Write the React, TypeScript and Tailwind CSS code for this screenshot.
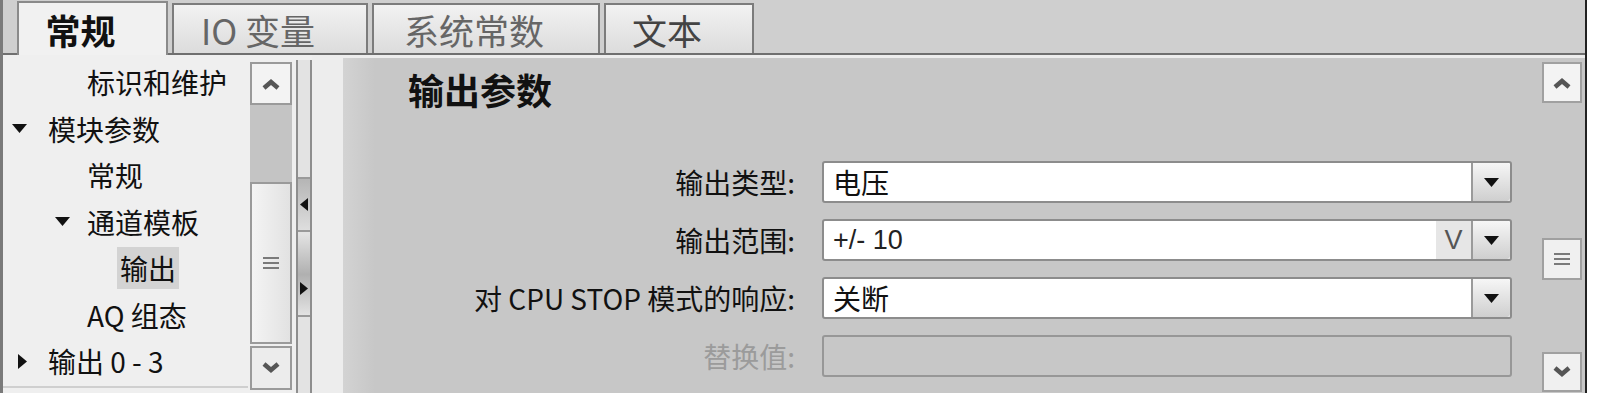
import React from "react";

const FONT = "font-['Noto_Sans_CJK_SC','Noto_Sans',sans-serif]";

function Chevron({ up }: { up?: boolean }) {
    return (
        <svg width="22" height="14" viewBox="0 0 22 14">
            <polyline
                points={up ? "4,11 11,5 18,11" : "4,3 11,9 18,3"}
                fill="none"
                stroke="#555"
                strokeWidth="4.5"
                strokeLinejoin="miter"
            />
        </svg>
    );
}

function Grip() {
    return (
        <div className="flex flex-col gap-[3px]">
            <div className="w-[16px] h-[2px] bg-[#7a7a7a]" />
            <div className="w-[16px] h-[2px] bg-[#7a7a7a]" />
            <div className="w-[16px] h-[2px] bg-[#7a7a7a]" />
        </div>
    );
}

function Down() {
    return (
        <svg width="15" height="9" viewBox="0 0 15 9">
            <polygon points="0,0 15,0 7.5,9" fill="#111" />
        </svg>
    );
}

function Right() {
    return (
        <svg width="9" height="15" viewBox="0 0 9 15">
            <polygon points="0,0 9,7.5 0,15" fill="#111" />
        </svg>
    );
}

function Left() {
    return (
        <svg width="8" height="13" viewBox="0 0 8 13">
            <polygon points="8,0 0,6.5 8,13" fill="#111" />
        </svg>
    );
}

function SmallRight() {
    return (
        <svg width="8" height="13" viewBox="0 0 8 13">
            <polygon points="0,0 8,6.5 0,13" fill="#111" />
        </svg>
    );
}

function DropButton() {
    return (
        <div className="w-[39px] h-full flex items-center justify-center border-l-2 border-[#9a9a9a] bg-gradient-to-b from-[#f6f6f6] to-[#cfcfcf] rounded-r-[3px]">
            <Down />
        </div>
    );
}

export default function App() {
    return (
        <div className={`w-[1600px] h-[407px] bg-white ${FONT}`}>
            <div className="w-[1587px] h-[393px] flex flex-col border-l-[3px] border-r-2 border-l-[#7a7a7a] border-r-[#222]">
                {/* Tabs */}
                <div className="h-[55px] flex items-end gap-[4px] pl-[14px] bg-[#cfcfcf] border-b-2 border-[#6f6f6f]">
                    <div className="w-[151px] h-[54px] -mb-[2px] flex items-center justify-center pr-[24px] bg-[#f1f1f1] border-2 border-b-0 border-[#8a8a8a] text-[35px] font-bold text-[#111] leading-none">
                        常规
                    </div>
                    <div className="w-[196px] h-[50px] flex items-center justify-center pr-[24px] bg-gradient-to-b from-[#f2f2f2] to-[#dcdcdc] border-2 border-b-0 border-[#7c7c7c] text-[35px] text-[#666] leading-none">
                        IO 变量
                    </div>
                    <div className="w-[228px] h-[50px] flex items-center justify-center pr-[24px] bg-gradient-to-b from-[#f2f2f2] to-[#dcdcdc] border-2 border-b-0 border-[#7c7c7c] text-[35px] text-[#666] leading-none">
                        系统常数
                    </div>
                    <div className="w-[150px] h-[50px] flex items-center justify-center pr-[24px] bg-gradient-to-b from-[#f2f2f2] to-[#dcdcdc] border-2 border-b-0 border-[#7c7c7c] text-[35px] text-[#444] leading-none">
                        文本
                    </div>
                </div>

                {/* Body */}
                <div className="flex-1 flex bg-[#efefef]">
                    {/* Tree */}
                    <div className="w-[245px] pt-[4px] text-[28px] text-[#111] leading-none border-b-2 border-[#cfcfcf] mb-[5px]">
                        <div className="h-[46.5px] flex items-center pl-[84px]">标识和维护</div>
                        <div className="h-[46.5px] flex items-center pl-[9px]">
                            <span className="w-[36px] flex"><Down /></span>模块参数
                        </div>
                        <div className="h-[46.5px] flex items-center pl-[84px]">常规</div>
                        <div className="h-[46.5px] flex items-center pl-[52px]">
                            <span className="w-[32px] flex"><Down /></span>通道模板
                        </div>
                        <div className="h-[46.5px] flex items-center pl-[114px]">
                            <span className="h-[42px] flex items-center px-[3px] bg-[#d3d3d3]">输出</span>
                        </div>
                        <div className="h-[46.5px] flex items-center pl-[84px]">AQ 组态</div>
                        <div className="h-[46.5px] flex items-center pl-[15px]">
                            <span className="w-[30px] flex"><Right /></span>输出 0 - 3
                        </div>
                    </div>

                    {/* Tree scrollbar */}
                    <div className="w-[42px] ml-[2px] pt-[7px] pb-[3px] flex flex-col">
                        <div className="h-[43px] flex items-center justify-center bg-[#f3f3f3] border-2 border-[#9a9a9a]">
                            <Chevron up />
                        </div>
                        <div className="h-[77px] bg-[#c4c4c4]" />
                        <div className="h-[162px] flex items-center justify-center bg-gradient-to-r from-[#f4f4f4] to-[#e2e2e2] border-2 border-[#9a9a9a]">
                            <Grip />
                        </div>
                        <div className="h-[44px] mt-[2px] flex items-center justify-center bg-[#ececec] border-2 border-[#9a9a9a]">
                            <Chevron />
                        </div>
                    </div>

                    {/* Splitter */}
                    <div className="w-[16px] ml-[4px] mt-[5px] flex flex-col bg-[#e3e3e3] border-x-2 border-[#8e8e8e]">
                        <div className="h-[117px]" />
                        <div className="h-[55px] flex items-center justify-center bg-gradient-to-b from-[#b5b5b5] to-[#dedede] border-y-2 border-[#9a9a9a]">
                            <Left />
                        </div>
                        <div className="h-[83px] mt-[2px] flex items-end justify-center pb-[20px] bg-gradient-to-b from-[#e3e3e3] via-[#b0b0b0] to-[#e3e3e3] border-b-2 border-[#9a9a9a]">
                            <SmallRight />
                        </div>
                    </div>

                    <div className="w-[31px] bg-[#ededed]" />

                    {/* Content */}
                    <div className="flex-1 flex bg-[#c7c7c7] border-t-[3px] border-[#ededed]">
                        <div className="w-[32px] bg-gradient-to-r from-[#d3d3d3] to-[#c7c7c7]" />
                        <div className="flex-1 flex flex-col">
                            <div className="pl-[33px] mt-[9px] h-[44px] flex items-center text-[36px] font-bold text-[#111] leading-none">
                                输出参数
                            </div>
                            <div className="mt-[50px] flex flex-col gap-[16px] text-[28px] leading-none">
                                <div className="h-[42px] flex items-center">
                                    <div className="w-[420px] text-right text-[#111]">输出类型:</div>
                                    <div className="w-[690px] h-full ml-[27px] flex bg-white border-2 border-[#8c8c8c] rounded-[3px]">
                                        <div className="flex-1 flex items-center pl-[9px] text-[#111]">电压</div>
                                        <DropButton />
                                    </div>
                                </div>
                                <div className="h-[42px] flex items-center">
                                    <div className="w-[420px] text-right text-[#111]">输出范围:</div>
                                    <div className="w-[690px] h-full ml-[27px] flex bg-white border-2 border-[#8c8c8c] rounded-[3px]">
                                        <div className="flex-1 flex items-center pl-[9px] text-[#222] font-['Liberation_Sans',sans-serif] text-[27px]">+/- 10</div>
                                        <div className="w-[35px] flex items-center justify-center bg-[#e6e6e6] text-[#555] font-['Liberation_Sans',sans-serif] text-[27px]">V</div>
                                        <DropButton />
                                    </div>
                                </div>
                                <div className="h-[42px] flex items-center">
                                    <div className="w-[420px] text-right text-[#111]">对 CPU STOP 模式的响应:</div>
                                    <div className="w-[690px] h-full ml-[27px] flex bg-white border-2 border-[#8c8c8c] rounded-[3px]">
                                        <div className="flex-1 flex items-center pl-[9px] text-[#111]">关断</div>
                                        <DropButton />
                                    </div>
                                </div>
                                <div className="h-[42px] flex items-center">
                                    <div className="w-[420px] text-right text-[#9b9b9b]">替换值:</div>
                                    <div className="w-[690px] h-full ml-[27px] border-2 border-[#979797] rounded-[3px]" />
                                </div>
                            </div>
                        </div>

                        {/* Right scrollbar */}
                        <div className="w-[40px] mr-[3px] pt-[4px] flex flex-col">
                            <div className="h-[41px] flex items-center justify-center bg-[#f3f3f3] border-2 border-[#a0a0a0]">
                                <Chevron up />
                            </div>
                            <div className="h-[42px] mt-[135px] flex items-center justify-center bg-[#f0f0f0] border-2 border-[#a0a0a0]">
                                <Grip />
                            </div>
                            <div className="h-[40px] mt-[72px] flex items-center justify-center bg-[#f0f0f0] border-2 border-[#a0a0a0]">
                                <Chevron />
                            </div>
                        </div>
                    </div>
                </div>
            </div>
        </div>
    );
}
